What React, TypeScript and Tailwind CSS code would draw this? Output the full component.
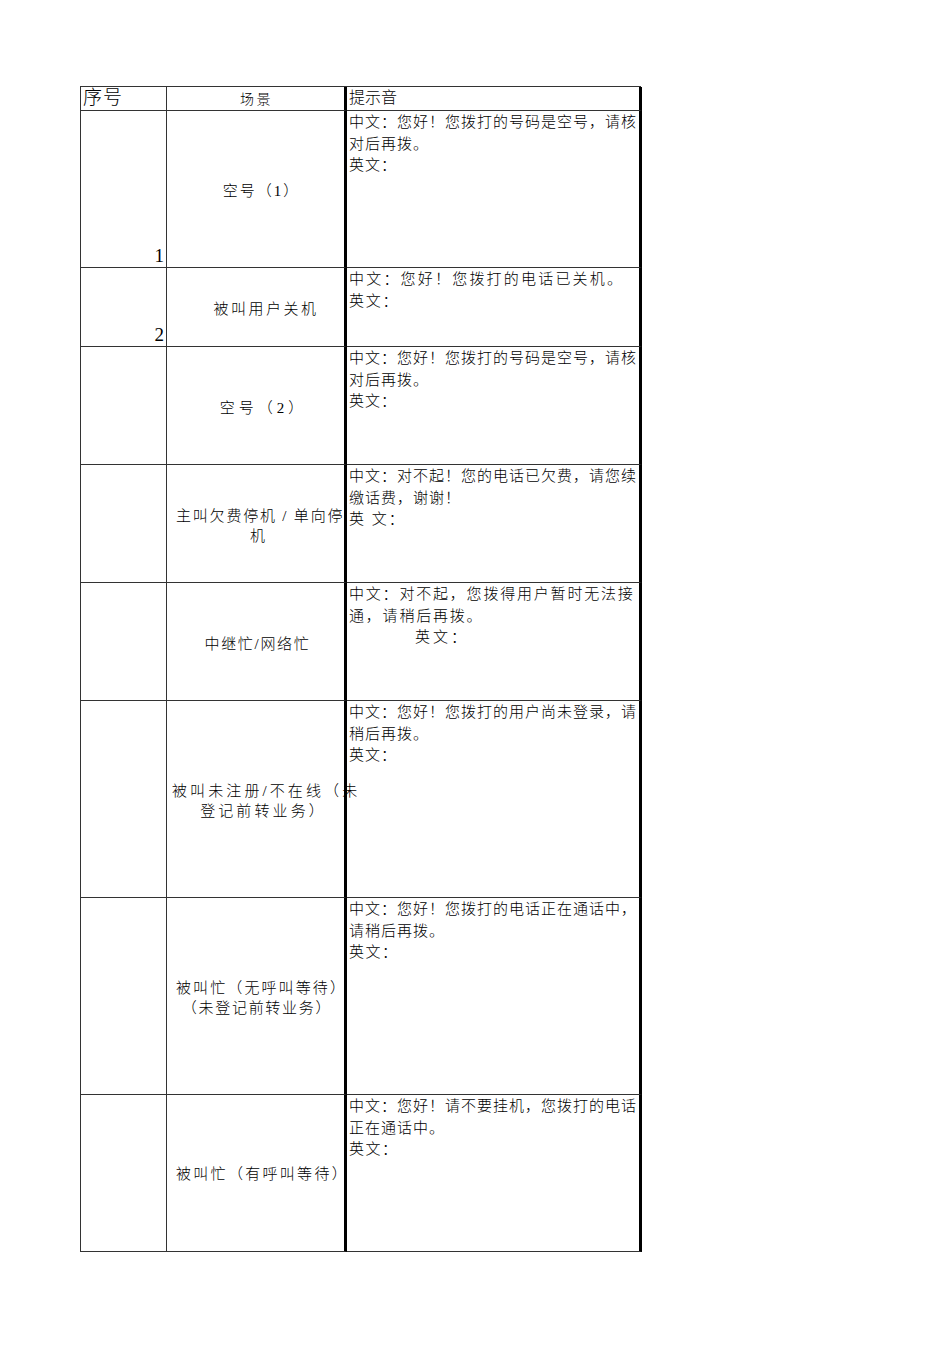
import React from "react";

type Line = { t: string; cls?: string };

const font = "font-['Liberation_Serif','Noto_Sans_CJK_SC',serif]";

function ScenarioCell({ lines, tracking }: { lines: Line[]; tracking: string }) {
  return (
    <div
      className={`flex flex-col items-center justify-center border-b border-r-[3px] border-b-[#333] border-r-black text-[15px] leading-[20px] text-black ${tracking}`}
    >
      {lines.map((l, i) => (
        <div key={i} className={`whitespace-nowrap ${l.cls ?? ""}`}>
          {l.t}
        </div>
      ))}
    </div>
  );
}

function PromptCell({ lines }: { lines: Line[] }) {
  return (
    <div className="border-b border-r-[3px] border-b-[#333] border-r-black pl-[2px] pt-[1px] text-[15px] leading-[21.6px] text-black">
      {lines.map((l, i) => (
        <div key={i} className={`whitespace-nowrap ${l.cls ?? ""}`}>
          {l.t}
        </div>
      ))}
    </div>
  );
}

function NumCell({ n }: { n?: string }) {
  return (
    <div className="flex items-end justify-end border-b border-r border-[#333] pb-[1px] pr-[2px] text-[19px] leading-[20px] text-black">
      {n ?? ""}
    </div>
  );
}

export default function App() {
  return (
    <div className={`min-h-[1345px] w-[950px] bg-white pl-[80px] pt-[86px] font-light ${font}`}>
      <div className="grid w-[561px] grid-cols-[86px_180px_295px] grid-rows-[24px_157px_79px_118px_118px_118px_197px_197px_157px] border-l border-t border-[#333]">
        {/* header */}
        <div className="border-b border-r border-[#333] pl-[2px] text-[19px] leading-[22px] tracking-[1px] text-black">
          序号
        </div>
        <div className="flex items-end justify-center border-b border-r-[3px] border-b-[#333] border-r-black pb-[1px] pl-[2px] text-[14px] leading-[18px] tracking-[2.5px] text-black">
          场景
        </div>
        <div className="border-b border-r-[3px] border-b-[#333] border-r-black pl-[2px] pt-[1px] text-[16px] leading-[20px] text-black">
          提示音
        </div>

        {/* row 1 */}
        <NumCell n="1" />
        <ScenarioCell tracking="tracking-[2px]" lines={[{ t: "空号（1）", cls: "mt-[4px] pl-[12px]" }]} />
        <PromptCell
          lines={[
            { t: "中文：您好！您拨打的号码是空号，请核", cls: "tracking-[1px]" },
            { t: "对后再拨。", cls: "tracking-[1px]" },
            { t: "英文：", cls: "tracking-[1px]" },
          ]}
        />

        {/* row 2 */}
        <NumCell n="2" />
        <ScenarioCell tracking="tracking-[2.5px]" lines={[{ t: "被叫用户关机", cls: "mt-[3px] pl-[21px]" }]} />
        <PromptCell
          lines={[
            { t: "中文：您好！您拨打的电话已关机。", cls: "tracking-[2.2px]" },
            { t: "英文：", cls: "tracking-[1.7px]" },
          ]}
        />

        {/* row 3 */}
        <NumCell />
        <ScenarioCell tracking="tracking-[4px]" lines={[{ t: "空号（2）", cls: "mt-[4px] pl-[16px]" }]} />
        <PromptCell
          lines={[
            { t: "中文：您好！您拨打的号码是空号，请核", cls: "tracking-[1px]" },
            { t: "对后再拨。", cls: "tracking-[1px]" },
            { t: "英文：", cls: "tracking-[1px]" },
          ]}
        />

        {/* row 4 */}
        <NumCell />
        <ScenarioCell
          tracking="tracking-[1.8px]"
          lines={[
            { t: "主叫欠费停机 / 单向停", cls: "mt-[4px] self-start pl-[9px]" },
            { t: "机", cls: "pl-[6px]" },
          ]}
        />
        <PromptCell
          lines={[
            { t: "中文：对不起！您的电话已欠费，请您续", cls: "tracking-[1px]" },
            { t: "缴话费，谢谢！", cls: "tracking-[1px]" },
            { t: "英 文：", cls: "tracking-[2px]" },
          ]}
        />

        {/* row 5 */}
        <NumCell />
        <ScenarioCell tracking="tracking-[1.7px]" lines={[{ t: "中继忙/网络忙", cls: "mt-[4px] pl-[4px]" }]} />
        <PromptCell
          lines={[
            { t: "中文：对不起，您拨得用户暂时无法接", cls: "tracking-[1.8px]" },
            { t: "通，请稍后再拨。", cls: "tracking-[1.8px]" },
            { t: "英文：", cls: "tracking-[3px] pl-[66px]" },
          ]}
        />

        {/* row 6 */}
        <NumCell />
        <ScenarioCell
          tracking="tracking-[3.1px]"
          lines={[
            { t: "被叫未注册/不在线（未", cls: "mt-[3px] self-start pl-[5px]" },
            { t: "登记前转业务）", cls: "pl-[16px]" },
          ]}
        />
        <PromptCell
          lines={[
            { t: "中文：您好！您拨打的用户尚未登录，请", cls: "tracking-[1px]" },
            { t: "稍后再拨。", cls: "tracking-[1px]" },
            { t: "英文：", cls: "tracking-[1px]" },
          ]}
        />

        {/* row 7 */}
        <NumCell />
        <ScenarioCell
          tracking="tracking-[2.1px]"
          lines={[
            { t: "被叫忙（无呼叫等待）", cls: "mt-[3px] pl-[12px]" },
            { t: "（未登记前转业务）", cls: "tracking-[1.7px] pl-[3px]" },
          ]}
        />
        <PromptCell
          lines={[
            { t: "中文：您好！您拨打的电话正在通话中，", cls: "tracking-[1px]" },
            { t: "请稍后再拨。", cls: "tracking-[1px]" },
            { t: "英文：", cls: "tracking-[1.5px]" },
          ]}
        />

        {/* row 8 */}
        <NumCell />
        <ScenarioCell tracking="tracking-[2.3px]" lines={[{ t: "被叫忙（有呼叫等待）", cls: "mt-[2px] pl-[14px]" }]} />
        <PromptCell
          lines={[
            { t: "中文：您好！请不要挂机，您拨打的电话", cls: "tracking-[1px]" },
            { t: "正在通话中。", cls: "tracking-[1px]" },
            { t: "英文：", cls: "tracking-[1.5px]" },
          ]}
        />
      </div>
    </div>
  );
}
